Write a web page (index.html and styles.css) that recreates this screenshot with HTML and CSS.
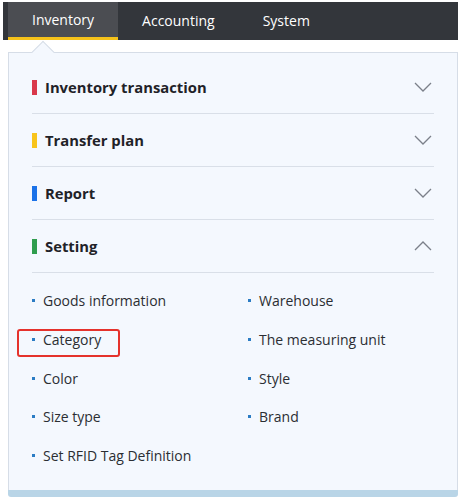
FILE: index.html
```html
<!DOCTYPE html>
<html>
<head>
	<title>Inventory menu</title>
	<link rel="stylesheet" href="styles.css">
</head>
<body>

	<div class="topbar">
		<div class="tab active">Inventory</div>
		<div class="tab">Accounting</div>
		<div class="tab">System</div>
	</div>

	<div class="panel">
		<div class="caret"></div>

		<div class="group">
			<span class="mark red"></span>
			<span class="title">Inventory transaction</span>
			<svg class="chev" width="18" height="10" viewBox="0 0 18 10"><path d="M1 1 L9 9 L17 1" fill="none" stroke="#7b808a" stroke-width="1.3"/></svg>
		</div>
		<div class="group">
			<span class="mark yellow"></span>
			<span class="title">Transfer plan</span>
			<svg class="chev" width="18" height="10" viewBox="0 0 18 10"><path d="M1 1 L9 9 L17 1" fill="none" stroke="#7b808a" stroke-width="1.3"/></svg>
		</div>
		<div class="group">
			<span class="mark blue"></span>
			<span class="title">Report</span>
			<svg class="chev" width="18" height="10" viewBox="0 0 18 10"><path d="M1 1 L9 9 L17 1" fill="none" stroke="#7b808a" stroke-width="1.3"/></svg>
		</div>
		<div class="group">
			<span class="mark green"></span>
			<span class="title">Setting</span>
			<svg class="chev" width="18" height="10" viewBox="0 0 18 10"><path d="M1 9 L9 1 L17 9" fill="none" stroke="#7b808a" stroke-width="1.3"/></svg>
		</div>

		<div class="items">
			<div class="item">Goods information</div>
			<div class="item">Warehouse</div>
			<div class="item marked">Category</div>
			<div class="item">The measuring unit</div>
			<div class="item">Color</div>
			<div class="item">Style</div>
			<div class="item">Size type</div>
			<div class="item">Brand</div>
			<div class="item">Set RFID Tag Definition</div>
		</div>
	</div>
	<div class="under"></div>

</body>
</html>
```

FILE: styles.css
```css
body{
	margin: 0;
	background: #fff;
	font-family: "Open Sans", "Noto Sans", sans-serif;
}

.topbar{
	display: flex;
	height: 38px;
	margin: 2px 4px 0 3px;
	padding-left: 5px;
	background: #33363b;
}

.tab{
	padding: 0 24px;
	line-height: 37px;
	font-size: 14px;
	color: #fff;
}

.tab.active{
	background: #4b4d52;
	border-bottom: 3px solid #f5c21a;
	line-height: 35px;
}

.panel{
	position: relative;
	margin: 12px 4px 0 8px;
	padding: 8px 23px 15px 23px;
	background: #f4f8fe;
	border: 1px solid #d6dde7;
	border-bottom: none;
}

.caret{
	position: absolute;
	top: -9px;
	left: 26px;
	width: 15px;
	height: 15px;
	background: #f4f8fe;
	border-top: 1px solid #d6dde7;
	border-left: 1px solid #d6dde7;
	transform: rotate(45deg);
}

.group{
	display: flex;
	align-items: center;
	height: 52px;
	border-bottom: 1px solid #d9dfe8;
}

.mark{
	width: 5px;
	height: 15px;
	margin-right: 8px;
}
.red{ background: #d9384b; }
.yellow{ background: #f8c41c; }
.blue{ background: #1b72e8; }
.green{ background: #2f9d4e; }

.title{
	flex: 1;
	font-size: 14.8px;
	font-weight: bold;
	color: #1f2228;
}

.chev{
	margin-right: 2px;
}

.items{
	display: grid;
	grid-template-columns: 216px 1fr;
	grid-auto-rows: 38.7px;
	padding-top: 8.5px;
}

.item{
	position: relative;
	display: flex;
	align-items: center;
	font-size: 14px;
	color: #2b2e33;
}

.item::before{
	content: "";
	width: 3px;
	height: 3px;
	margin-right: 8px;
	background: #2b7cc4;
}

.marked::after{
	content: "";
	position: absolute;
	left: -15px;
	top: 8.5px;
	width: 99px;
	height: 24px;
	border: 2px solid #e5322c;
	border-radius: 3px;
}

.under{
	height: 7px;
	margin: 0 4px 0 8px;
	background: #b9d5e7;
	border-radius: 0 0 3px 3px;
}
```
